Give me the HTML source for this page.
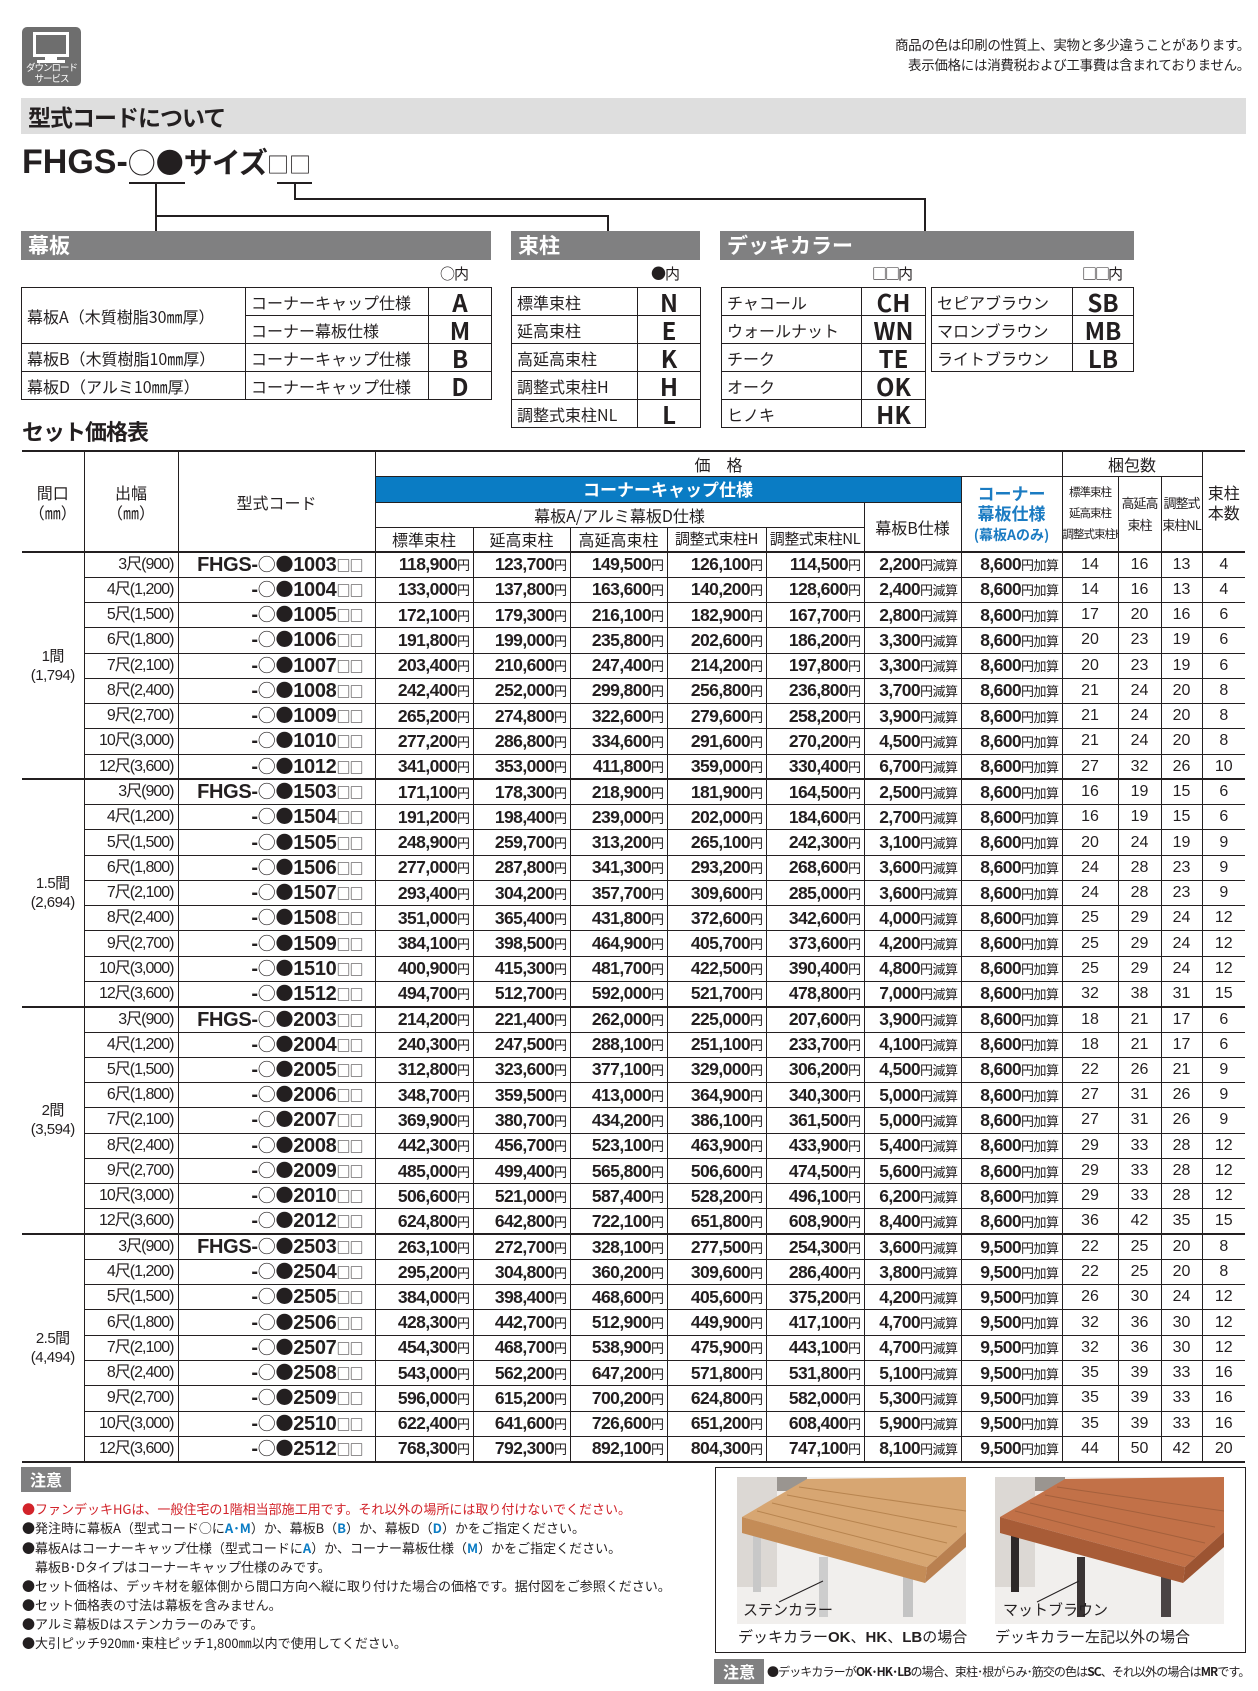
<!DOCTYPE html>
<html><head><meta charset="utf-8">
<style>
*{margin:0;padding:0;box-sizing:border-box}
body{width:1258px;height:1691px;position:relative;background:#fff;color:#231f20;font-family:"Liberation Sans","Noto Sans CJK JP",sans-serif;overflow:hidden}
.a{position:absolute}
.j{font-family:"Noto Sans CJK JP",sans-serif}
.sec{position:absolute;top:231px;height:29px;background:#808081;color:#fff;font-weight:bold;font-size:21px;line-height:29px;padding-left:7px}
table.k{position:absolute;border-collapse:collapse;table-layout:fixed}
table.k td{border:1.5px solid #231f20;height:28px;font-size:16px;line-height:20px;padding-left:5px;white-space:nowrap;overflow:hidden}
table.k td.L{font-weight:bold;font-size:24px;text-align:center;padding:0}
table.m{position:absolute;left:22px;top:450px;width:1223px;border-collapse:collapse;table-layout:fixed}
table.m td{border:1px solid #231f20;padding:0;white-space:nowrap;overflow:hidden;text-align:right;padding-right:3px;font-weight:bold;font-size:17.5px;letter-spacing:-.6px;line-height:20px}
table.m tr.d td{height:25.28px}
table.m td:first-child{border-left:none}
table.m td:last-child{border-right:none}
table.m td u{text-decoration:none;font-weight:normal;font-size:13px;letter-spacing:-.5px;font-family:"Noto Sans CJK JP",sans-serif}
table.m td.n{text-align:center;font-weight:normal;font-size:16px;letter-spacing:0;padding:0}
table.m td.s{font-weight:normal;font-size:16px;letter-spacing:-1px;padding-right:4px}
table.m td.g{text-align:center;font-weight:normal;font-size:15px;letter-spacing:-.5px;padding:0;line-height:19px}
table.m td.c{font-size:20px;letter-spacing:-.3px;padding-right:12px}
table.m td.c i{font-style:normal;font-family:"Noto Sans CJK JP",sans-serif;font-size:18px;font-weight:normal}
table.m td.c em{font-style:normal;font-family:"Noto Sans CJK JP",sans-serif;font-size:14px;font-weight:normal;letter-spacing:-1px}
table.m td.h{text-align:center;font-weight:normal;font-size:16px;letter-spacing:0;padding:0;line-height:20px}
table.m tr.hb td{border-bottom:2.5px solid #231f20}
table.m tr.gb td{border-top:2.5px solid #231f20}
.note{position:absolute;left:22px;font-size:13px;line-height:19px;white-space:nowrap}
.bl{color:#0b7dc5;font-weight:bold}
</style></head><body>

<div class="a" style="left:22px;top:27px;width:59px;height:59px;background:#6e6e6e;border-radius:5px"></div>
<div class="a" style="left:33px;top:32px;width:36px;height:25px;border:3px solid #fff;background:#6e6e6e"></div>
<div class="a" style="left:45px;top:57px;width:12px;height:3px;background:#fff"></div>
<div class="a" style="left:37px;top:60px;width:28px;height:3px;background:#fff"></div>
<div class="a j" style="left:22px;top:62px;width:59px;text-align:center;color:#fff;font-size:9.5px;line-height:11px;letter-spacing:-1px">ダウンロード<br>サービス</div>

<div class="a j" style="right:8px;top:34px;font-size:13.5px;line-height:20px;text-align:right;letter-spacing:-.3px">商品の色は印刷の性質上、実物と多少違うことがあります。<br>表示価格には消費税および工事費は含まれておりません。</div>

<div class="a" style="left:21px;top:98px;width:1225px;height:36px;background:#dedede"></div>
<div class="a j" style="left:28px;top:99px;font-size:23px;font-weight:bold;line-height:34px;letter-spacing:-1px">型式コードについて</div>

<div class="a" style="left:22px;top:141px;font-size:34px;font-weight:bold;line-height:40px;white-space:nowrap">FHGS-<span class="j" style="font-size:28px;font-weight:normal">○●</span><span class="j" style="font-size:29px;letter-spacing:-1px">サイズ</span><span class="j" style="font-size:22px;font-weight:normal">□□</span></div>

<div class="a" style="left:129px;top:182px;width:56px;height:1.5px;background:#231f20"></div>
<div class="a" style="left:277px;top:182px;width:35px;height:1.5px;background:#231f20"></div>
<div class="a" style="left:155px;top:182px;width:1.5px;height:49px;background:#231f20"></div>
<div class="a" style="left:155px;top:215px;width:453px;height:1.5px;background:#231f20"></div>
<div class="a" style="left:607px;top:215px;width:1.5px;height:16px;background:#231f20"></div>
<div class="a" style="left:294px;top:182px;width:1.5px;height:17px;background:#231f20"></div>
<div class="a" style="left:294px;top:198px;width:631px;height:1.5px;background:#231f20"></div>
<div class="a" style="left:924px;top:198px;width:1.5px;height:33px;background:#231f20"></div>

<div class="sec j" style="left:21px;width:470px">幕板</div>
<div class="sec j" style="left:511px;width:189px">束柱</div>
<div class="sec j" style="left:720px;width:414px">デッキカラー</div>

<div class="a j" style="left:440px;top:263px;font-size:15px;line-height:22px;letter-spacing:-1px">○内</div>
<div class="a j" style="left:651px;top:263px;font-size:15px;line-height:22px;letter-spacing:-1px">●内</div>
<div class="a j" style="left:872px;top:263px;font-size:15px;line-height:22px;letter-spacing:-2px">□□内</div>
<div class="a j" style="left:1082px;top:263px;font-size:15px;line-height:22px;letter-spacing:-2px">□□内</div>

<table class="k j" style="left:21px;top:287px;width:470px">
<col style="width:224px"><col style="width:183px"><col style="width:63px">
<tr><td rowspan="2">幕板A（木質樹脂30㎜厚）</td><td>コーナーキャップ仕様</td><td class="L">A</td></tr>
<tr><td>コーナー幕板仕様</td><td class="L">M</td></tr>
<tr><td>幕板B（木質樹脂10㎜厚）</td><td>コーナーキャップ仕様</td><td class="L">B</td></tr>
<tr><td>幕板D（アルミ10㎜厚）</td><td>コーナーキャップ仕様</td><td class="L">D</td></tr>
</table>
<table class="k j" style="left:511px;top:287px;width:189px">
<col style="width:126px"><col style="width:63px">
<tr><td>標準束柱</td><td class="L">N</td></tr>
<tr><td>延高束柱</td><td class="L">E</td></tr>
<tr><td>高延高束柱</td><td class="L">K</td></tr>
<tr><td>調整式束柱H</td><td class="L">H</td></tr>
<tr><td>調整式束柱NL</td><td class="L">L</td></tr>
</table>
<table class="k j" style="left:721px;top:287px;width:204px">
<col style="width:140px"><col style="width:64px">
<tr><td>チャコール</td><td class="L">CH</td></tr>
<tr><td>ウォールナット</td><td class="L">WN</td></tr>
<tr><td>チーク</td><td class="L">TE</td></tr>
<tr><td>オーク</td><td class="L">OK</td></tr>
<tr><td>ヒノキ</td><td class="L">HK</td></tr>
</table>
<table class="k j" style="left:931px;top:287px;width:202px">
<col style="width:141px"><col style="width:61px">
<tr><td>セピアブラウン</td><td class="L">SB</td></tr>
<tr><td>マロンブラウン</td><td class="L">MB</td></tr>
<tr><td>ライトブラウン</td><td class="L">LB</td></tr>
</table>

<div class="a j" style="left:22px;top:416px;font-size:22px;font-weight:bold;line-height:30px;letter-spacing:-1px">セット価格表</div>

<table class="m">
<colgroup><col style="width:62px"><col style="width:94px"><col style="width:197px"><col style="width:98px"><col style="width:97px"><col style="width:97px"><col style="width:99px"><col style="width:98px"><col style="width:97px"><col style="width:101px"><col style="width:56px"><col style="width:43px"><col style="width:41px"><col style="width:43px"></colgroup>
<tr style="height:25px"><td class="h j" rowspan="4" style="border-top:2.5px solid #231f20;border-bottom:2.5px solid #231f20">間口<br>（㎜）</td><td class="h j" rowspan="4" style="border-top:2.5px solid #231f20;border-bottom:2.5px solid #231f20">出幅<br>（㎜）</td><td class="h j" rowspan="4" style="border-top:2.5px solid #231f20;border-bottom:2.5px solid #231f20">型式コード</td><td class="h j" colspan="7" style="border-top:2.5px solid #231f20">価　格</td><td class="h j" colspan="3" style="border-top:2.5px solid #231f20">梱包数</td><td class="h j" rowspan="4" style="border-top:2.5px solid #231f20;border-bottom:2.5px solid #231f20;vertical-align:middle">束柱<br>本数</td></tr>
<tr style="height:26px"><td class="h j" colspan="6" style="background:#0a7cc4;color:#fff;font-weight:bold;font-size:17px">コーナーキャップ仕様</td><td class="h j" rowspan="3" style="color:#1a7bc2;font-weight:bold;font-size:17px;line-height:20px;border-bottom:2.5px solid #231f20">コーナー<br>幕板仕様<br><span style="font-size:14px">(幕板Aのみ)</span></td><td class="h j" rowspan="3" style="font-size:11.5px;line-height:21px;letter-spacing:-1px;border-bottom:2.5px solid #231f20">標準束柱<br>延高束柱<br>調整式束柱H</td><td class="h j" rowspan="3" style="font-size:13px;line-height:22px;letter-spacing:-1px;border-bottom:2.5px solid #231f20">高延高<br>束柱</td><td class="h j" rowspan="3" style="font-size:13px;line-height:22px;letter-spacing:-1px;border-bottom:2.5px solid #231f20">調整式<br>束柱NL</td></tr>
<tr style="height:25px"><td class="h j" colspan="5">幕板A/アルミ幕板D仕様</td><td class="h j" rowspan="2" style="border-bottom:2.5px solid #231f20">幕板B仕様</td></tr>
<tr style="height:25px" class="hb"><td class="h j">標準束柱</td><td class="h j">延高束柱</td><td class="h j">高延高束柱</td><td class="h j" style="font-size:15px;letter-spacing:-.5px">調整式束柱H</td><td class="h j" style="font-size:15px;letter-spacing:-.5px">調整式束柱NL</td></tr>

<tr class="d"><td class="g" rowspan="9">1間<br>(1,794)</td><td class="s">3尺(900)</td><td class="c">FHGS-<i>○●</i>1003<em>□□</em></td><td>118,900<u>円</u></td><td>123,700<u>円</u></td><td>149,500<u>円</u></td><td>126,100<u>円</u></td><td>114,500<u>円</u></td><td>2,200<u>円減算</u></td><td>8,600<u>円加算</u></td><td class="n">14</td><td class="n">16</td><td class="n">13</td><td class="n">4</td></tr>
<tr class="d"><td class="s">4尺(1,200)</td><td class="c">-<i>○●</i>1004<em>□□</em></td><td>133,000<u>円</u></td><td>137,800<u>円</u></td><td>163,600<u>円</u></td><td>140,200<u>円</u></td><td>128,600<u>円</u></td><td>2,400<u>円減算</u></td><td>8,600<u>円加算</u></td><td class="n">14</td><td class="n">16</td><td class="n">13</td><td class="n">4</td></tr>
<tr class="d"><td class="s">5尺(1,500)</td><td class="c">-<i>○●</i>1005<em>□□</em></td><td>172,100<u>円</u></td><td>179,300<u>円</u></td><td>216,100<u>円</u></td><td>182,900<u>円</u></td><td>167,700<u>円</u></td><td>2,800<u>円減算</u></td><td>8,600<u>円加算</u></td><td class="n">17</td><td class="n">20</td><td class="n">16</td><td class="n">6</td></tr>
<tr class="d"><td class="s">6尺(1,800)</td><td class="c">-<i>○●</i>1006<em>□□</em></td><td>191,800<u>円</u></td><td>199,000<u>円</u></td><td>235,800<u>円</u></td><td>202,600<u>円</u></td><td>186,200<u>円</u></td><td>3,300<u>円減算</u></td><td>8,600<u>円加算</u></td><td class="n">20</td><td class="n">23</td><td class="n">19</td><td class="n">6</td></tr>
<tr class="d"><td class="s">7尺(2,100)</td><td class="c">-<i>○●</i>1007<em>□□</em></td><td>203,400<u>円</u></td><td>210,600<u>円</u></td><td>247,400<u>円</u></td><td>214,200<u>円</u></td><td>197,800<u>円</u></td><td>3,300<u>円減算</u></td><td>8,600<u>円加算</u></td><td class="n">20</td><td class="n">23</td><td class="n">19</td><td class="n">6</td></tr>
<tr class="d"><td class="s">8尺(2,400)</td><td class="c">-<i>○●</i>1008<em>□□</em></td><td>242,400<u>円</u></td><td>252,000<u>円</u></td><td>299,800<u>円</u></td><td>256,800<u>円</u></td><td>236,800<u>円</u></td><td>3,700<u>円減算</u></td><td>8,600<u>円加算</u></td><td class="n">21</td><td class="n">24</td><td class="n">20</td><td class="n">8</td></tr>
<tr class="d"><td class="s">9尺(2,700)</td><td class="c">-<i>○●</i>1009<em>□□</em></td><td>265,200<u>円</u></td><td>274,800<u>円</u></td><td>322,600<u>円</u></td><td>279,600<u>円</u></td><td>258,200<u>円</u></td><td>3,900<u>円減算</u></td><td>8,600<u>円加算</u></td><td class="n">21</td><td class="n">24</td><td class="n">20</td><td class="n">8</td></tr>
<tr class="d"><td class="s">10尺(3,000)</td><td class="c">-<i>○●</i>1010<em>□□</em></td><td>277,200<u>円</u></td><td>286,800<u>円</u></td><td>334,600<u>円</u></td><td>291,600<u>円</u></td><td>270,200<u>円</u></td><td>4,500<u>円減算</u></td><td>8,600<u>円加算</u></td><td class="n">21</td><td class="n">24</td><td class="n">20</td><td class="n">8</td></tr>
<tr class="d"><td class="s">12尺(3,600)</td><td class="c">-<i>○●</i>1012<em>□□</em></td><td>341,000<u>円</u></td><td>353,000<u>円</u></td><td>411,800<u>円</u></td><td>359,000<u>円</u></td><td>330,400<u>円</u></td><td>6,700<u>円減算</u></td><td>8,600<u>円加算</u></td><td class="n">27</td><td class="n">32</td><td class="n">26</td><td class="n">10</td></tr>

<tr class="d gb"><td class="g" rowspan="9">1.5間<br>(2,694)</td><td class="s">3尺(900)</td><td class="c">FHGS-<i>○●</i>1503<em>□□</em></td><td>171,100<u>円</u></td><td>178,300<u>円</u></td><td>218,900<u>円</u></td><td>181,900<u>円</u></td><td>164,500<u>円</u></td><td>2,500<u>円減算</u></td><td>8,600<u>円加算</u></td><td class="n">16</td><td class="n">19</td><td class="n">15</td><td class="n">6</td></tr>
<tr class="d"><td class="s">4尺(1,200)</td><td class="c">-<i>○●</i>1504<em>□□</em></td><td>191,200<u>円</u></td><td>198,400<u>円</u></td><td>239,000<u>円</u></td><td>202,000<u>円</u></td><td>184,600<u>円</u></td><td>2,700<u>円減算</u></td><td>8,600<u>円加算</u></td><td class="n">16</td><td class="n">19</td><td class="n">15</td><td class="n">6</td></tr>
<tr class="d"><td class="s">5尺(1,500)</td><td class="c">-<i>○●</i>1505<em>□□</em></td><td>248,900<u>円</u></td><td>259,700<u>円</u></td><td>313,200<u>円</u></td><td>265,100<u>円</u></td><td>242,300<u>円</u></td><td>3,100<u>円減算</u></td><td>8,600<u>円加算</u></td><td class="n">20</td><td class="n">24</td><td class="n">19</td><td class="n">9</td></tr>
<tr class="d"><td class="s">6尺(1,800)</td><td class="c">-<i>○●</i>1506<em>□□</em></td><td>277,000<u>円</u></td><td>287,800<u>円</u></td><td>341,300<u>円</u></td><td>293,200<u>円</u></td><td>268,600<u>円</u></td><td>3,600<u>円減算</u></td><td>8,600<u>円加算</u></td><td class="n">24</td><td class="n">28</td><td class="n">23</td><td class="n">9</td></tr>
<tr class="d"><td class="s">7尺(2,100)</td><td class="c">-<i>○●</i>1507<em>□□</em></td><td>293,400<u>円</u></td><td>304,200<u>円</u></td><td>357,700<u>円</u></td><td>309,600<u>円</u></td><td>285,000<u>円</u></td><td>3,600<u>円減算</u></td><td>8,600<u>円加算</u></td><td class="n">24</td><td class="n">28</td><td class="n">23</td><td class="n">9</td></tr>
<tr class="d"><td class="s">8尺(2,400)</td><td class="c">-<i>○●</i>1508<em>□□</em></td><td>351,000<u>円</u></td><td>365,400<u>円</u></td><td>431,800<u>円</u></td><td>372,600<u>円</u></td><td>342,600<u>円</u></td><td>4,000<u>円減算</u></td><td>8,600<u>円加算</u></td><td class="n">25</td><td class="n">29</td><td class="n">24</td><td class="n">12</td></tr>
<tr class="d"><td class="s">9尺(2,700)</td><td class="c">-<i>○●</i>1509<em>□□</em></td><td>384,100<u>円</u></td><td>398,500<u>円</u></td><td>464,900<u>円</u></td><td>405,700<u>円</u></td><td>373,600<u>円</u></td><td>4,200<u>円減算</u></td><td>8,600<u>円加算</u></td><td class="n">25</td><td class="n">29</td><td class="n">24</td><td class="n">12</td></tr>
<tr class="d"><td class="s">10尺(3,000)</td><td class="c">-<i>○●</i>1510<em>□□</em></td><td>400,900<u>円</u></td><td>415,300<u>円</u></td><td>481,700<u>円</u></td><td>422,500<u>円</u></td><td>390,400<u>円</u></td><td>4,800<u>円減算</u></td><td>8,600<u>円加算</u></td><td class="n">25</td><td class="n">29</td><td class="n">24</td><td class="n">12</td></tr>
<tr class="d"><td class="s">12尺(3,600)</td><td class="c">-<i>○●</i>1512<em>□□</em></td><td>494,700<u>円</u></td><td>512,700<u>円</u></td><td>592,000<u>円</u></td><td>521,700<u>円</u></td><td>478,800<u>円</u></td><td>7,000<u>円減算</u></td><td>8,600<u>円加算</u></td><td class="n">32</td><td class="n">38</td><td class="n">31</td><td class="n">15</td></tr>

<tr class="d gb"><td class="g" rowspan="9">2間<br>(3,594)</td><td class="s">3尺(900)</td><td class="c">FHGS-<i>○●</i>2003<em>□□</em></td><td>214,200<u>円</u></td><td>221,400<u>円</u></td><td>262,000<u>円</u></td><td>225,000<u>円</u></td><td>207,600<u>円</u></td><td>3,900<u>円減算</u></td><td>8,600<u>円加算</u></td><td class="n">18</td><td class="n">21</td><td class="n">17</td><td class="n">6</td></tr>
<tr class="d"><td class="s">4尺(1,200)</td><td class="c">-<i>○●</i>2004<em>□□</em></td><td>240,300<u>円</u></td><td>247,500<u>円</u></td><td>288,100<u>円</u></td><td>251,100<u>円</u></td><td>233,700<u>円</u></td><td>4,100<u>円減算</u></td><td>8,600<u>円加算</u></td><td class="n">18</td><td class="n">21</td><td class="n">17</td><td class="n">6</td></tr>
<tr class="d"><td class="s">5尺(1,500)</td><td class="c">-<i>○●</i>2005<em>□□</em></td><td>312,800<u>円</u></td><td>323,600<u>円</u></td><td>377,100<u>円</u></td><td>329,000<u>円</u></td><td>306,200<u>円</u></td><td>4,500<u>円減算</u></td><td>8,600<u>円加算</u></td><td class="n">22</td><td class="n">26</td><td class="n">21</td><td class="n">9</td></tr>
<tr class="d"><td class="s">6尺(1,800)</td><td class="c">-<i>○●</i>2006<em>□□</em></td><td>348,700<u>円</u></td><td>359,500<u>円</u></td><td>413,000<u>円</u></td><td>364,900<u>円</u></td><td>340,300<u>円</u></td><td>5,000<u>円減算</u></td><td>8,600<u>円加算</u></td><td class="n">27</td><td class="n">31</td><td class="n">26</td><td class="n">9</td></tr>
<tr class="d"><td class="s">7尺(2,100)</td><td class="c">-<i>○●</i>2007<em>□□</em></td><td>369,900<u>円</u></td><td>380,700<u>円</u></td><td>434,200<u>円</u></td><td>386,100<u>円</u></td><td>361,500<u>円</u></td><td>5,000<u>円減算</u></td><td>8,600<u>円加算</u></td><td class="n">27</td><td class="n">31</td><td class="n">26</td><td class="n">9</td></tr>
<tr class="d"><td class="s">8尺(2,400)</td><td class="c">-<i>○●</i>2008<em>□□</em></td><td>442,300<u>円</u></td><td>456,700<u>円</u></td><td>523,100<u>円</u></td><td>463,900<u>円</u></td><td>433,900<u>円</u></td><td>5,400<u>円減算</u></td><td>8,600<u>円加算</u></td><td class="n">29</td><td class="n">33</td><td class="n">28</td><td class="n">12</td></tr>
<tr class="d"><td class="s">9尺(2,700)</td><td class="c">-<i>○●</i>2009<em>□□</em></td><td>485,000<u>円</u></td><td>499,400<u>円</u></td><td>565,800<u>円</u></td><td>506,600<u>円</u></td><td>474,500<u>円</u></td><td>5,600<u>円減算</u></td><td>8,600<u>円加算</u></td><td class="n">29</td><td class="n">33</td><td class="n">28</td><td class="n">12</td></tr>
<tr class="d"><td class="s">10尺(3,000)</td><td class="c">-<i>○●</i>2010<em>□□</em></td><td>506,600<u>円</u></td><td>521,000<u>円</u></td><td>587,400<u>円</u></td><td>528,200<u>円</u></td><td>496,100<u>円</u></td><td>6,200<u>円減算</u></td><td>8,600<u>円加算</u></td><td class="n">29</td><td class="n">33</td><td class="n">28</td><td class="n">12</td></tr>
<tr class="d"><td class="s">12尺(3,600)</td><td class="c">-<i>○●</i>2012<em>□□</em></td><td>624,800<u>円</u></td><td>642,800<u>円</u></td><td>722,100<u>円</u></td><td>651,800<u>円</u></td><td>608,900<u>円</u></td><td>8,400<u>円減算</u></td><td>8,600<u>円加算</u></td><td class="n">36</td><td class="n">42</td><td class="n">35</td><td class="n">15</td></tr>

<tr class="d gb"><td class="g" rowspan="9" style="border-bottom:2.5px solid #231f20">2.5間<br>(4,494)</td><td class="s">3尺(900)</td><td class="c">FHGS-<i>○●</i>2503<em>□□</em></td><td>263,100<u>円</u></td><td>272,700<u>円</u></td><td>328,100<u>円</u></td><td>277,500<u>円</u></td><td>254,300<u>円</u></td><td>3,600<u>円減算</u></td><td>9,500<u>円加算</u></td><td class="n">22</td><td class="n">25</td><td class="n">20</td><td class="n">8</td></tr>
<tr class="d"><td class="s">4尺(1,200)</td><td class="c">-<i>○●</i>2504<em>□□</em></td><td>295,200<u>円</u></td><td>304,800<u>円</u></td><td>360,200<u>円</u></td><td>309,600<u>円</u></td><td>286,400<u>円</u></td><td>3,800<u>円減算</u></td><td>9,500<u>円加算</u></td><td class="n">22</td><td class="n">25</td><td class="n">20</td><td class="n">8</td></tr>
<tr class="d"><td class="s">5尺(1,500)</td><td class="c">-<i>○●</i>2505<em>□□</em></td><td>384,000<u>円</u></td><td>398,400<u>円</u></td><td>468,600<u>円</u></td><td>405,600<u>円</u></td><td>375,200<u>円</u></td><td>4,200<u>円減算</u></td><td>9,500<u>円加算</u></td><td class="n">26</td><td class="n">30</td><td class="n">24</td><td class="n">12</td></tr>
<tr class="d"><td class="s">6尺(1,800)</td><td class="c">-<i>○●</i>2506<em>□□</em></td><td>428,300<u>円</u></td><td>442,700<u>円</u></td><td>512,900<u>円</u></td><td>449,900<u>円</u></td><td>417,100<u>円</u></td><td>4,700<u>円減算</u></td><td>9,500<u>円加算</u></td><td class="n">32</td><td class="n">36</td><td class="n">30</td><td class="n">12</td></tr>
<tr class="d"><td class="s">7尺(2,100)</td><td class="c">-<i>○●</i>2507<em>□□</em></td><td>454,300<u>円</u></td><td>468,700<u>円</u></td><td>538,900<u>円</u></td><td>475,900<u>円</u></td><td>443,100<u>円</u></td><td>4,700<u>円減算</u></td><td>9,500<u>円加算</u></td><td class="n">32</td><td class="n">36</td><td class="n">30</td><td class="n">12</td></tr>
<tr class="d"><td class="s">8尺(2,400)</td><td class="c">-<i>○●</i>2508<em>□□</em></td><td>543,000<u>円</u></td><td>562,200<u>円</u></td><td>647,200<u>円</u></td><td>571,800<u>円</u></td><td>531,800<u>円</u></td><td>5,100<u>円減算</u></td><td>9,500<u>円加算</u></td><td class="n">35</td><td class="n">39</td><td class="n">33</td><td class="n">16</td></tr>
<tr class="d"><td class="s">9尺(2,700)</td><td class="c">-<i>○●</i>2509<em>□□</em></td><td>596,000<u>円</u></td><td>615,200<u>円</u></td><td>700,200<u>円</u></td><td>624,800<u>円</u></td><td>582,000<u>円</u></td><td>5,300<u>円減算</u></td><td>9,500<u>円加算</u></td><td class="n">35</td><td class="n">39</td><td class="n">33</td><td class="n">16</td></tr>
<tr class="d"><td class="s">10尺(3,000)</td><td class="c">-<i>○●</i>2510<em>□□</em></td><td>622,400<u>円</u></td><td>641,600<u>円</u></td><td>726,600<u>円</u></td><td>651,200<u>円</u></td><td>608,400<u>円</u></td><td>5,900<u>円減算</u></td><td>9,500<u>円加算</u></td><td class="n">35</td><td class="n">39</td><td class="n">33</td><td class="n">16</td></tr>
<tr class="d hb"><td class="s">12尺(3,600)</td><td class="c">-<i>○●</i>2512<em>□□</em></td><td>768,300<u>円</u></td><td>792,300<u>円</u></td><td>892,100<u>円</u></td><td>804,300<u>円</u></td><td>747,100<u>円</u></td><td>8,100<u>円減算</u></td><td>9,500<u>円加算</u></td><td class="n">44</td><td class="n">50</td><td class="n">42</td><td class="n">20</td></tr>
</table>

<div class="a j" style="left:21px;top:1467px;width:50px;height:25px;background:#808081;color:#fff;font-weight:bold;font-size:16px;line-height:25px;text-align:center">注意</div>
<div class="note j" style="top:1499px;color:#d2232a">●ファンデッキHGは、一般住宅の1階相当部施工用です。それ以外の場所には取り付けないでください。</div>
<div class="note j" style="top:1518px">●発注時に幕板A（型式コード○に<span class="bl">A･M</span>）か、幕板B（<span class="bl">B</span>）か、幕板D（<span class="bl">D</span>）かをご指定ください。</div>
<div class="note j" style="top:1538px">●幕板Aはコーナーキャップ仕様（型式コードに<span class="bl">A</span>）か、コーナー幕板仕様（<span class="bl">M</span>）かをご指定ください。</div>
<div class="note j" style="top:1557px">　幕板B･Dタイプはコーナーキャップ仕様のみです。</div>
<div class="note j" style="top:1576px">●セット価格は、デッキ材を躯体側から間口方向へ縦に取り付けた場合の価格です。据付図をご参照ください。</div>
<div class="note j" style="top:1595px">●セット価格表の寸法は幕板を含みません。</div>
<div class="note j" style="top:1614px">●アルミ幕板Dはステンカラーのみです。</div>
<div class="note j" style="top:1633px">●大引ピッチ920㎜･束柱ピッチ1,800㎜以内で使用してください。</div>

<div class="a" style="left:715px;top:1467px;width:531px;height:186px;border:1.5px solid #231f20"></div>
<svg class="a" style="left:737px;top:1477px" width="229" height="147" viewBox="0 0 229 147">
<rect width="229" height="147" fill="#f1efed"/><rect width="40" height="110" fill="#dcd8d4"/><rect x="40" y="0" width="30" height="14" fill="#9a9590"/>
<rect x="16" y="55" width="8" height="60" fill="#c8c8c8"/><rect x="82" y="80" width="9" height="60" fill="#cdcdcd"/><rect x="166" y="98" width="10" height="42" fill="#c4c4c4"/>
<polygon points="70,2 229,0 229,55 190,90 5,40" fill="#d7a672"/>
<polygon points="5,40 190,90 188,106 5,56" fill="#c48c57"/>
<polygon points="190,90 229,55 229,70 188,106" fill="#b98050"/>
<g stroke="#b7844f" stroke-width="1" fill="none"><line x1="20" y1="34" x2="200" y2="80"/><line x1="35" y1="26" x2="210" y2="66"/><line x1="50" y1="18" x2="220" y2="50"/><line x1="62" y1="10" x2="229" y2="34"/></g>
<line x1="42" y1="125" x2="86" y2="104" stroke="#231f20"/>
<text x="6" y="138" font-family="Noto Sans CJK JP,sans-serif" font-size="15" fill="#231f20">ステンカラー</text>
</svg>
<svg class="a" style="left:995px;top:1477px" width="229" height="147" viewBox="0 0 229 147">
<rect width="229" height="147" fill="#f1efed"/><rect width="40" height="110" fill="#dcd8d4"/><rect x="40" y="0" width="30" height="14" fill="#9a9590"/>
<rect x="16" y="55" width="8" height="60" fill="#2d2828"/><rect x="82" y="80" width="8" height="60" fill="#3a3434"/><rect x="166" y="98" width="10" height="42" fill="#4a4444"/>
<polygon points="70,2 229,0 229,55 190,90 5,40" fill="#c27148"/>
<polygon points="5,40 190,90 188,106 5,56" fill="#a85c37"/>
<polygon points="190,90 229,55 229,70 188,106" fill="#9c5432"/>
<g stroke="#a4603c" stroke-width="1" fill="none"><line x1="20" y1="34" x2="200" y2="80"/><line x1="35" y1="26" x2="210" y2="66"/><line x1="50" y1="18" x2="220" y2="50"/><line x1="62" y1="10" x2="229" y2="34"/></g>
<line x1="42" y1="125" x2="84" y2="104" stroke="#231f20"/>
<text x="8" y="138" font-family="Noto Sans CJK JP,sans-serif" font-size="15" fill="#231f20">マットブラウン</text>
</svg>
<div class="a j" style="left:738px;top:1627px;font-size:15px;line-height:20px;white-space:nowrap">デッキカラー<b style="font-family:'Liberation Sans',sans-serif">OK</b>、<b style="font-family:'Liberation Sans',sans-serif">HK</b>、<b style="font-family:'Liberation Sans',sans-serif">LB</b>の場合</div>
<div class="a j" style="left:995px;top:1627px;font-size:15px;line-height:20px;white-space:nowrap">デッキカラー左記以外の場合</div>

<div class="a j" style="left:714px;top:1659px;width:50px;height:25px;background:#808081;color:#fff;font-weight:bold;font-size:16px;line-height:25px;text-align:center">注意</div>
<div class="a j" style="left:767px;top:1662px;font-size:12px;line-height:20px;white-space:nowrap;letter-spacing:-.9px">●デッキカラーが<b>OK･HK･LB</b>の場合、束柱･根がらみ･筋交の色は<b>SC</b>、それ以外の場合は<b>MR</b>です。</div>
</body></html>
